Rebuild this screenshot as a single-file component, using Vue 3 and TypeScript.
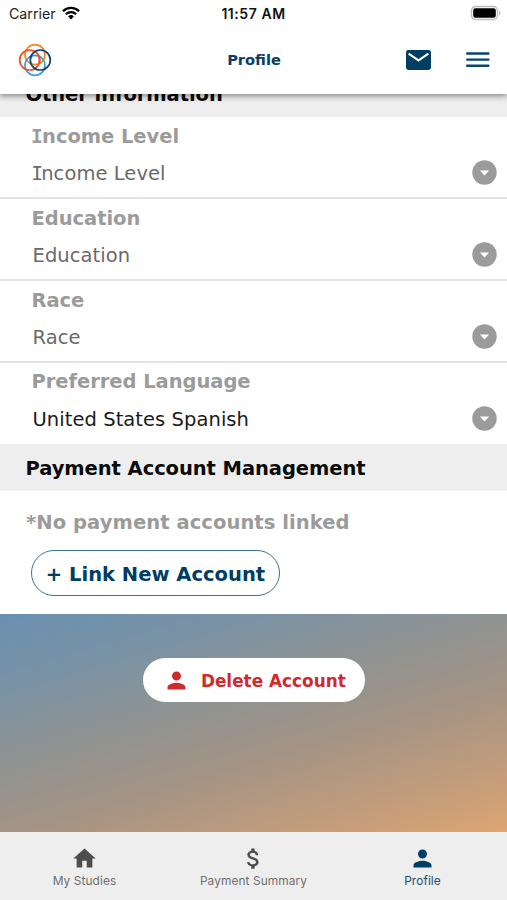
<script setup lang="ts">
interface Field {
  label: string
  value: string
  filled?: boolean
}

interface Tab {
  label: string
  icon: string
  active?: boolean
}

const fields: Field[] = [
  { label: 'Income Level', value: 'Income Level' },
  { label: 'Education', value: 'Education' },
  { label: 'Race', value: 'Race' },
  { label: 'Preferred Language', value: 'United States Spanish', filled: true },
]

const personPath =
  'M12 12c2.21 0 4-1.79 4-4s-1.79-4-4-4-4 1.79-4 4 1.79 4 4 4zm0 2c-2.67 0-8 1.34-8 4v2h16v-2c0-2.66-5.33-4-8-4z'

const tabs: Tab[] = [
  { label: 'My Studies', icon: 'M10 20v-6h4v6h5v-8h3L12 3 2 12h3v8z' },
  {
    label: 'Payment Summary',
    icon: 'M11.8 10.9c-2.27-.59-3-1.2-3-2.15 0-1.09 1.01-1.85 2.7-1.85 1.78 0 2.44.85 2.5 2.1h2.21c-.07-1.72-1.12-3.3-3.21-3.81V3h-3v2.16c-1.94.42-3.5 1.68-3.5 3.61 0 2.31 1.91 3.46 4.7 4.13 2.5.6 3 1.48 3 2.41 0 .69-.49 1.79-2.7 1.79-2.06 0-2.87-.92-2.98-2.1h-2.2c.12 2.19 1.76 3.42 3.68 3.83V21h3v-2.15c1.95-.37 3.5-1.5 3.5-3.55 0-2.84-2.43-3.81-4.7-4.4z',
  },
  { label: 'Profile', icon: personPath, active: true },
]

// A leading capital I is drawn with slab serifs, so it is split from the rest of the word.
const hasSlab = (text: string): boolean => text.startsWith('I')
const rest = (text: string): string => (hasSlab(text) ? text.slice(1) : text)
</script>

<template>
  <div class="screen">
    <header class="top">
      <div class="status">
        <div class="carrier">
          <span>Carrier</span>
          <svg class="wifi" viewBox="0 0 18 14">
            <path d="M1 5.2a11.3 11.3 0 0 1 16 0" />
            <path d="M3.9 8.2a7.2 7.2 0 0 1 10.2 0" />
            <path class="dot" d="M9 13.4 6.1 10.5a4.1 4.1 0 0 1 5.8 0z" />
          </svg>
        </div>
        <span class="time">11:57 AM</span>
        <svg class="battery" viewBox="0 0 32 16">
          <rect x="1.5" y="1.5" width="26" height="13" rx="4" fill="#fff" stroke="#bdbdbd" stroke-width="1.4" />
          <rect x="3.2" y="3.2" width="22.6" height="9.6" rx="2.2" fill="#000" />
          <path d="M29 5.6c1.9.7 1.9 4.1 0 4.8z" fill="#bdbdbd" />
        </svg>
      </div>
      <div class="bar">
        <svg class="logo" viewBox="0 0 34 34">
          <circle cx="17" cy="11.7" r="10" stroke="#f08a24" />
          <circle cx="17" cy="22.3" r="10" stroke="#3a9fdb" />
          <circle cx="11.7" cy="17" r="10" stroke="#f04e23" />
          <circle cx="22.3" cy="17" r="10" stroke="#0b426c" />
          <path d="M21.3 19.7a10 10 0 0 0 0-5.4" stroke="#f04e23" />
        </svg>
        <h1>Profile</h1>
        <div class="actions">
          <svg class="mail" viewBox="0 0 25 20">
            <rect x="0" y="0" width="25" height="20" rx="2.4" fill="#003d63" />
            <path d="M2.6 3.6 12.5 10.4 22.4 3.6" fill="none" stroke="#fff" stroke-width="2.1" />
          </svg>
          <svg class="menu" viewBox="0 0 24 16">
            <path d="M1.2 1.5H22.4M1.2 7.6H22.4M1.2 13.7H22.4" />
          </svg>
        </div>
      </div>
    </header>

    <main>
      <h2 class="band first">Other information</h2>
      <section class="fields">
        <div v-for="f in fields" :key="f.label" class="field">
          <div class="texts">
            <div class="label"><span v-if="hasSlab(f.label)" class="slab">I</span>{{ rest(f.label) }}</div>
            <div class="value" :class="{ filled: f.filled }"><span v-if="hasSlab(f.value)" class="slab">I</span>{{ rest(f.value) }}</div>
          </div>
          <svg class="drop" viewBox="0 0 25 25">
            <circle cx="12.5" cy="12.5" r="12.2" fill="#9b9b9b" />
            <path d="M7.9 10.6h9.2l-4.6 4.8z" fill="#fff" />
          </svg>
        </div>
      </section>
      <h2 class="band">Payment Account Management</h2>
      <section class="payment">
        <p>*No payment accounts linked</p>
        <button class="link">+ Link New Account</button>
      </section>
      <section class="danger">
        <button class="delete">
          <svg viewBox="0 0 24 24"><path :d="personPath" /></svg>
          <span>Delete Account</span>
        </button>
      </section>
    </main>

    <nav>
      <a v-for="t in tabs" :key="t.label" class="tab" :class="{ active: t.active }">
        <svg viewBox="0 0 24 24"><path :d="t.icon" /></svg>
        <span>{{ t.label }}</span>
      </a>
    </nav>
  </div>
</template>

<style>
body {
  margin: 0;
  background: #fff;
}
</style>

<style scoped>
.screen {
  width: 507px;
  height: 900px;
  display: flex;
  flex-direction: column;
  overflow: hidden;
  background: #fff;
  font-family: 'DejaVu Sans', Verdana, sans-serif;
}
h1,
h2,
p {
  margin: 0;
}
svg {
  display: block;
  flex: none;
}
button {
  font-family: inherit;
  font-weight: 700;
  margin: 0;
  box-sizing: border-box;
  background: #fff;
  display: flex;
  align-items: center;
}

.top {
  height: 94px;
  flex: none;
  position: relative;
  z-index: 1;
  background: #fff;
  box-shadow: 0 2px 6px rgba(0, 0, 0, 0.45);
}
.status {
  height: 27px;
  display: grid;
  grid-template-columns: 1fr auto 1fr;
  align-items: center;
  padding: 0 5px 0 9px;
  box-sizing: border-box;
  font: 400 14.2px/27px Inter, sans-serif;
  color: #222;
}
.carrier {
  display: flex;
  align-items: center;
  gap: 6px;
}
.wifi {
  width: 18px;
  height: 14px;
  margin-top: -2px;
  fill: none;
  stroke: #000;
  stroke-width: 2.3;
}
.wifi .dot {
  fill: #000;
  stroke: none;
}
.time {
  margin: 0 3px 0 -1px;
  font-weight: 600;
  font-size: 14px;
  letter-spacing: 0.55px;
  color: #111;
}
.battery {
  width: 32px;
  height: 16px;
  justify-self: end;
  margin-top: -1px;
}
.bar {
  height: 66px;
  display: grid;
  grid-template-columns: 1fr auto 1fr;
  align-items: center;
  padding: 0 17px 0 18px;
}
.logo {
  width: 34px;
  height: 34px;
  fill: none;
  stroke-width: 1.7;
}
h1 {
  font-size: 14.6px;
  line-height: 20px;
  color: #0a3d62;
}
.actions {
  display: flex;
  align-items: center;
  justify-self: end;
  gap: 35px;
}
.mail {
  width: 25px;
  height: 20px;
}
.menu {
  width: 24px;
  height: 16px;
  fill: none;
  stroke: #0a436b;
  stroke-width: 2.4;
  stroke-linecap: round;
}

main {
  flex: 1;
  display: flex;
  flex-direction: column;
  min-height: 0;
}
.band {
  height: 47px;
  flex: none;
  box-sizing: border-box;
  padding: 2px 0 0 25.5px;
  font-size: 19.5px;
  line-height: 46px;
  letter-spacing: -0.06px;
  color: #0a0a0a;
  background: #eee;
}
.band.first {
  margin-top: -24px;
}
.field {
  height: 82px;
  box-sizing: border-box;
  display: flex;
  justify-content: space-between;
  padding: 7px 10px 0 31.5px;
  border-bottom: 2px solid #e4e4e4;
}
.field:last-child {
  height: 81px;
  border-bottom: 0;
}
.label {
  padding-top: 1px;
  font-size: 19.5px;
  font-weight: 700;
  line-height: 24px;
  letter-spacing: -0.04px;
  color: #9b9b9b;
}
.value {
  margin-top: 13px;
  padding-left: 1px;
  font-size: 19.5px;
  line-height: 24px;
  letter-spacing: 0.06px;
  color: #6a6a6a;
}
.field:last-child .label {
  padding-top: 0;
}
.value.filled {
  margin-top: 14px;
  color: #1a1a1a;
}
.slab {
  font-family: 'DejaVu Sans Mono', monospace;
  line-height: 1;
  margin: 0 -0.03em 0 -0.03em;
}
.value .slab {
  margin: 0 -0.09em 0 -0.07em;
}
.drop {
  width: 25px;
  height: 25px;
  margin-top: 35.5px;
}

.payment {
  height: 123px;
  flex: none;
  box-sizing: border-box;
  padding: 19px 0 0 26px;
}
.payment p {
  font-size: 19.55px;
  font-weight: 700;
  line-height: 25px;
  letter-spacing: 0.06px;
  color: #9b9b9b;
}
.link {
  margin: 15px 0 0 5px;
  width: 249px;
  height: 46px;
  padding: 2px 0 0;
  justify-content: center;
  border: 1.4px solid #3f6f92;
  border-radius: 23px;
  font-size: 19.55px;
  color: #003d63;
}
.danger {
  flex: 1;
  display: flex;
  justify-content: center;
  align-items: flex-start;
  padding-top: 44px;
  background: linear-gradient(163.5deg, #6990b0 0%, #7a92a5 20%, #919391 42%, #a29386 59%, #c19c7c 82%, #dda572 100%);
}
.delete {
  width: 222px;
  height: 44px;
  padding: 1px 0 0 20px;
  border: 0;
  border-radius: 22px;
  font-size: 16.9px;
  color: #cf2b2d;
}
.delete svg {
  width: 27px;
  height: 27px;
  margin-right: 11.4px;
  fill: #cf2b2d;
}

nav {
  height: 68px;
  flex: none;
  display: grid;
  grid-template-columns: repeat(3, 1fr);
  background: #eee;
}
.tab {
  display: flex;
  flex-direction: column;
  align-items: center;
  padding-top: 13px;
  font: 400 11.9px/16px Inter, sans-serif;
  letter-spacing: 0.08px;
  color: #707070;
}
.tab svg {
  width: 27px;
  height: 27px;
  margin-bottom: 1px;
  fill: #4d4d4d;
}
.tab.active {
  color: #1d4d73;
}
.tab.active svg {
  fill: #003d63;
}
</style>
